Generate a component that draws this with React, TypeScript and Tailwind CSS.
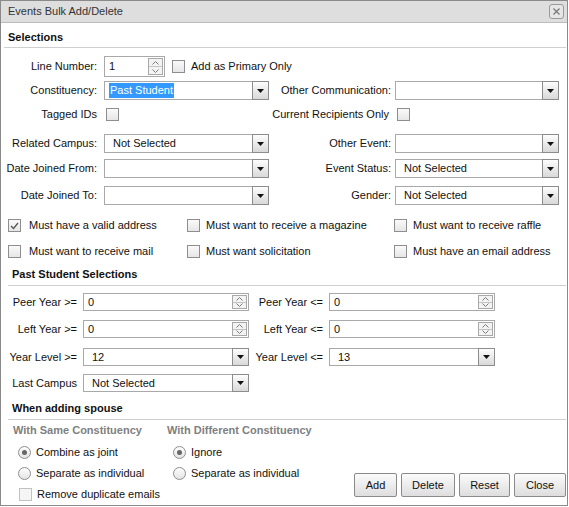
import React from "react"

const Arrow = () => (
  <div className="flex h-full w-[17px] shrink-0 items-center justify-center border border-[#8c8c8c] bg-gradient-to-b from-[#fdfdfd] to-[#d9d9d9]">
    <svg width="7" height="4" viewBox="0 0 7 4">
      <path d="M0 0h7L3.5 4z" fill="#111" />
    </svg>
  </div>
)

const Select = ({ value, width, highlight }: { value?: string; width: string; highlight?: boolean }) => (
  <div className={`flex h-full ${width}`}>
    <div className="flex min-w-0 flex-1 items-center border border-r-0 border-[#a9a9a9] bg-white pl-[4px]">
      {highlight ? (
        <span className="bg-[#3399ff] px-[1px] leading-[15px] text-white">{value}</span>
      ) : (
        <span className="pl-[4px]">{value}</span>
      )}
    </div>
    <Arrow />
  </div>
)

const Spin = () => (
  <div className="mr-[1px] flex h-[calc(100%-2px)] w-[15px] flex-col border border-[#a8a8a8] bg-[#f3f3f3]">
    <div className="flex flex-1 items-center justify-center border-b border-[#c4c4c4]">
      <svg width="7" height="4" viewBox="0 0 7 4">
        <path d="M0.5 3.5L3.5 0.5L6.5 3.5" stroke="#7a7a7a" fill="none" />
      </svg>
    </div>
    <div className="flex flex-1 items-center justify-center">
      <svg width="7" height="4" viewBox="0 0 7 4">
        <path d="M0.5 0.5L3.5 3.5L6.5 0.5" stroke="#7a7a7a" fill="none" />
      </svg>
    </div>
  </div>
)

const NumInput = ({ value, width }: { value: string; width: string }) => (
  <div className={`flex h-full items-center border border-[#a9a9a9] bg-white pl-[4px] ${width}`}>
    <span className="flex-1">{value}</span>
    <Spin />
  </div>
)

const Check = ({ checked, disabled }: { checked?: boolean; disabled?: boolean }) => (
  <div
    className={`flex h-[13px] w-[13px] shrink-0 items-center justify-center border ${
      disabled ? "border-[#c2c2c2] bg-[#f5f5f5]" : "border-[#8e8e8e] bg-gradient-to-b from-[#fafafa] to-[#e6e6e6]"
    }`}
  >
    {checked && (
      <svg width="9" height="8" viewBox="0 0 9 8">
        <path d="M1 4L3.5 6.5L8 1" stroke="#555" strokeWidth="1.3" fill="none" />
      </svg>
    )}
  </div>
)

const Radio = ({ on }: { on?: boolean }) => (
  <div className="flex h-[13px] w-[13px] shrink-0 items-center justify-center rounded-full border border-[#8e8e8e] bg-gradient-to-b from-[#fdfdfd] to-[#e4e4e4]">
    {on && <div className="h-[5px] w-[5px] rounded-full bg-[#666]" />}
  </div>
)

const Btn = ({ label, width }: { label: string; width: string }) => (
  <button
    type="button"
    className={`flex h-[24px] items-center justify-center rounded-[2px] border border-[#8a8a8a] bg-gradient-to-b from-[#fbfbfb] to-[#dedede] text-[11px] text-[#111] ${width}`}
  >
    {label}
  </button>
)

const Heading = ({ title, cls }: { title: string; cls: string }) => (
  <div className={`flex items-center border-b border-[#cfcfcf] font-bold ${cls}`}>{title}</div>
)

const LeftLabel = ({ children }: { children: React.ReactNode }) => (
  <div className="w-[96px] shrink-0 text-right">{children}</div>
)

const RightLabel = ({ children, cls = "" }: { children: React.ReactNode; cls?: string }) => (
  <div className={`w-[122px] shrink-0 text-right ${cls}`}>{children}</div>
)

export default function App() {
  return (
    <div className="h-[507px] w-[569px] bg-white font-['Liberation_Sans',Arial,sans-serif] text-[11px] leading-[13px] text-[#111]">
      <div className="flex h-[506px] w-[568px] flex-col border border-[#8a8a8a]">
        {/* title bar */}
        <div className="flex h-[22px] shrink-0 items-center justify-between border-b border-[#bcbcbc] bg-[#dedede] pl-[7px] pr-[3px]">
          <span className="text-[#333]">Events Bulk Add/Delete</span>
          <div className="flex h-[15px] w-[15px] items-center justify-center rounded-[3px] border border-[#9a9a9a] bg-[#e6e6e6]">
            <svg width="7" height="7" viewBox="0 0 7 7">
              <path d="M0.5 0.5L6.5 6.5M6.5 0.5L0.5 6.5" stroke="#777" strokeWidth="1.2" />
            </svg>
          </div>
        </div>

        <Heading title="Selections" cls="ml-[3px] mr-[1px] h-[25px] pl-[4px] pt-[4px]" />

        {/* row 1 */}
        <div className="mt-[8px] flex h-[21px] items-center">
          <LeftLabel>Line Number:</LeftLabel>
          <div className="ml-[7px] h-full">
            <NumInput value="1" width="w-[61px]" />
          </div>
          <div className="ml-[7px]">
            <Check />
          </div>
          <span className="ml-[6px]">Add as Primary Only</span>
        </div>

        {/* row 2 */}
        <div className="mt-[4px] flex h-[19px] items-center">
          <div className="flex h-full w-[268px] items-center">
            <LeftLabel>Constituency:</LeftLabel>
            <div className="ml-[7px] h-full">
              <Select value="Past Student" width="w-[165px]" highlight />
            </div>
          </div>
          <RightLabel>Other Communication:</RightLabel>
          <div className="ml-[4px] h-full">
            <Select width="w-[164px]" />
          </div>
        </div>

        {/* row 3 */}
        <div className="mt-[5px] flex h-[19px] items-center">
          <div className="flex h-full w-[268px] items-center">
            <LeftLabel>Tagged IDs</LeftLabel>
            <div className="ml-[9px]">
              <Check />
            </div>
          </div>
          <RightLabel cls="pr-[2px]">Current Recipients Only</RightLabel>
          <div className="ml-[6px]">
            <Check />
          </div>
        </div>

        {/* row 4 */}
        <div className="mt-[10px] flex h-[19px] items-center">
          <div className="flex h-full w-[268px] items-center">
            <LeftLabel>Related Campus:</LeftLabel>
            <div className="ml-[7px] h-full">
              <Select value="Not Selected" width="w-[165px]" />
            </div>
          </div>
          <RightLabel>Other Event:</RightLabel>
          <div className="ml-[4px] h-full">
            <Select width="w-[164px]" />
          </div>
        </div>

        {/* row 5 */}
        <div className="mt-[6px] flex h-[19px] items-center">
          <div className="flex h-full w-[268px] items-center">
            <LeftLabel>Date Joined From:</LeftLabel>
            <div className="ml-[7px] h-full">
              <Select width="w-[165px]" />
            </div>
          </div>
          <RightLabel>Event Status:</RightLabel>
          <div className="ml-[4px] h-full">
            <Select value="Not Selected" width="w-[164px]" />
          </div>
        </div>

        {/* row 6 */}
        <div className="mt-[8px] flex h-[19px] items-center">
          <div className="flex h-full w-[268px] items-center">
            <LeftLabel>Date Joined To:</LeftLabel>
            <div className="ml-[7px] h-full">
              <Select width="w-[165px]" />
            </div>
          </div>
          <RightLabel>Gender:</RightLabel>
          <div className="ml-[4px] h-full">
            <Select value="Not Selected" width="w-[164px]" />
          </div>
        </div>

        {/* check rows */}
        <div className="mt-[11px] flex h-[19px] items-center pl-[7px]">
          <div className="flex w-[179px] items-center gap-[8px]">
            <Check checked />
            <span>Must have a valid address</span>
          </div>
          <div className="flex w-[207px] items-center gap-[6px]">
            <Check />
            <span>Must want to receive a magazine</span>
          </div>
          <div className="flex items-center gap-[6px]">
            <Check />
            <span>Must want to receive raffle</span>
          </div>
        </div>
        <div className="mt-[7px] flex h-[19px] items-center pl-[7px]">
          <div className="flex w-[179px] items-center gap-[8px]">
            <Check />
            <span>Must want to receive mail</span>
          </div>
          <div className="flex w-[207px] items-center gap-[6px]">
            <Check />
            <span>Must want solicitation</span>
          </div>
          <div className="flex items-center gap-[6px]">
            <Check />
            <span>Must have an email address</span>
          </div>
        </div>

        <Heading title="Past Student Selections" cls="mt-[2px] ml-[7px] mr-[1px] h-[23px] pl-[4px]" />

        {/* past student rows */}
        <div className="mt-[7px] flex h-[18px] items-center">
          <div className="w-[76px] shrink-0 text-right">Peer Year &gt;=</div>
          <div className="ml-[6px] h-full">
            <NumInput value="0" width="w-[166px]" />
          </div>
          <div className="w-[74px] shrink-0 text-right">Peer Year &lt;=</div>
          <div className="ml-[6px] h-full">
            <NumInput value="0" width="w-[166px]" />
          </div>
        </div>
        <div className="mt-[9px] flex h-[18px] items-center">
          <div className="w-[76px] shrink-0 text-right">Left Year &gt;=</div>
          <div className="ml-[6px] h-full">
            <NumInput value="0" width="w-[166px]" />
          </div>
          <div className="w-[74px] shrink-0 text-right">Left Year &lt;=</div>
          <div className="ml-[6px] h-full">
            <NumInput value="0" width="w-[166px]" />
          </div>
        </div>
        <div className="mt-[10px] flex h-[18px] items-center">
          <div className="w-[76px] shrink-0 text-right">Year Level &gt;=</div>
          <div className="ml-[6px] h-full">
            <Select value="12" width="w-[166px]" />
          </div>
          <div className="w-[74px] shrink-0 text-right">Year Level &lt;=</div>
          <div className="ml-[6px] h-full">
            <Select value="13" width="w-[166px]" />
          </div>
        </div>
        <div className="mt-[8px] flex h-[18px] items-center">
          <div className="w-[76px] shrink-0 text-right">Last Campus</div>
          <div className="ml-[6px] h-full">
            <Select value="Not Selected" width="w-[166px]" />
          </div>
        </div>

        <Heading title="When adding spouse" cls="mt-[6px] ml-[7px] mr-[1px] h-[22px] pl-[4px]" />

        {/* spouse options + buttons */}
        <div className="flex">
          <div className="flex flex-col">
            <div className="mt-[1px] flex h-[18px] items-center font-bold text-[#808080]">
              <div className="w-[166px] pl-[12px]">With Same Constituency</div>
              <div>With Different Constituency</div>
            </div>
            <div className="mt-[4px] flex h-[18px] items-center">
              <div className="flex w-[166px] items-center gap-[5px] pl-[17px]">
                <Radio on />
                <span>Combine as joint</span>
              </div>
              <div className="flex items-center gap-[5px] pl-[6px]">
                <Radio on />
                <span>Ignore</span>
              </div>
            </div>
            <div className="mt-[3px] flex h-[18px] items-center">
              <div className="flex w-[166px] items-center gap-[5px] pl-[17px]">
                <Radio />
                <span>Separate as individual</span>
              </div>
              <div className="flex items-center gap-[5px] pl-[6px]">
                <Radio />
                <span>Separate as individual</span>
              </div>
            </div>
            <div className="mt-[3px] flex h-[18px] items-center gap-[5px] pl-[18px]">
              <Check disabled />
              <span>Remove duplicate emails</span>
            </div>
          </div>
          <div className="mb-[6px] ml-auto mr-[1px] flex gap-[4px] self-end">
            <Btn label="Add" width="w-[43px]" />
            <Btn label="Delete" width="w-[54px]" />
            <Btn label="Reset" width="w-[51px]" />
            <Btn label="Close" width="w-[52px]" />
          </div>
        </div>
      </div>
    </div>
  )
}
